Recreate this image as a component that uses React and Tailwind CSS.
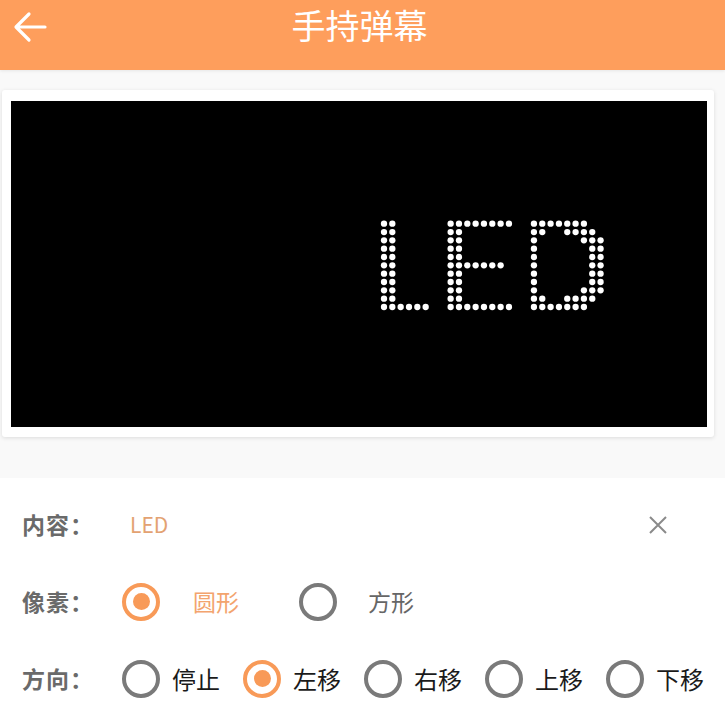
import React, { useState } from "react";

const FONT = { fontFamily: '"Noto Sans CJK SC", "Noto Sans", sans-serif' };

// dot patterns for the LED preview, 11 rows each
const LETTERS = [
  {
    col: 0,
    rows: ["11", "11", "11", "11", "11", "11", "11", "11", "11", "11", "111111"],
  },
  {
    col: 8,
    rows: ["11111111", "11", "11", "11", "11", "1111111", "11", "11", "11", "11", "11111111"],
  },
  {
    col: 18,
    rows: [
      "1111111..",
      "11..1111.",
      "1.....111",
      "1......11",
      "1......11",
      "1......11",
      "1......11",
      "1......11",
      "1.....111",
      "11..1111.",
      "1111111..",
    ],
  },
];

const LedScreen = () => {
  const pitch = 8.33;
  const x0 = 373;
  const y0 = 122.7;
  const dots = [];
  LETTERS.forEach((letter, li) => {
    letter.rows.forEach((row, r) => {
      row.split("").forEach((c, k) => {
        if (c === "1") {
          dots.push(
            <circle
              key={li + "-" + r + "-" + k}
              cx={x0 + (letter.col + k) * pitch}
              cy={y0 + r * pitch}
              r="3.15"
              fill="#fff"
            />
          );
        }
      });
    });
  });
  return (
    <svg width="696" height="326" viewBox="0 0 696 326" className="block">
      <rect width="696" height="326" fill="#000" />
      {dots}
    </svg>
  );
};

const Radio = ({ checked }) => {
  return checked ? (
    <span className="flex items-center justify-center w-[38px] h-[38px] shrink-0 rounded-full border-[4px] border-[#f89a58]">
      <span className="w-[17px] h-[17px] rounded-full bg-[#f89a58]" />
    </span>
  ) : (
    <span className="block w-[38px] h-[38px] shrink-0 rounded-full border-[4px] border-[#7a7a7a]" />
  );
};

const Label = ({ children }) => (
  <div className="w-[122px] pl-[22px] shrink-0 text-[23px] font-bold tracking-[1px] text-[#6a6a6a] leading-none">
    {children}
  </div>
);

const App = () => {
  const [shape, setShape] = useState("round");
  const [dir, setDir] = useState("left");
  const dirs = [
    { key: "stop", name: "停止" },
    { key: "left", name: "左移" },
    { key: "right", name: "右移" },
    { key: "up", name: "上移" },
    { key: "down", name: "下移" },
  ];

  return (
    <div className="w-[725px] h-[724px] overflow-hidden bg-[#f9f9f9]" style={FONT}>
      {/* top bar */}
      <div className="relative h-[70px] bg-[#fe9e5c] shadow-[0_1px_3px_rgba(0,0,0,0.08)]">
        <button className="absolute left-[10px] top-[8px] p-[2px]">
          <svg width="36" height="34" viewBox="0 0 36 34" fill="none">
            <path
              d="M33 17H5M17 4L4 17l13 13"
              stroke="#fff"
              strokeWidth="3.2"
              strokeLinecap="round"
              strokeLinejoin="round"
            />
          </svg>
        </button>
        <h1 className="pt-[3px] pr-[6px] text-center text-[34px] leading-[44px] text-white font-normal">
          手持弹幕
        </h1>
      </div>

      {/* preview */}
      <div className="mt-[20px] ml-[2px] w-[712px] bg-white rounded-[3px] pt-[11px] pl-[9px] pb-[10px] shadow-[0_1px_4px_rgba(0,0,0,0.12)]">
        <LedScreen />
      </div>

      {/* settings */}
      <div className="mt-[41px] bg-white pt-[8px] h-[300px]">
        <div className="flex items-center h-[77px]">
          <Label>内容：</Label>
          <span className="ml-[8px] text-[21px] text-[#e3a272]">LED</span>
          <button className="ml-auto mr-[56px] p-[1px]">
            <svg width="20" height="20" viewBox="0 0 20 20">
              <path d="M2 2l16 16M18 2L2 18" stroke="#8a8a8a" strokeWidth="2" />
            </svg>
          </button>
        </div>

        <div className="flex items-center h-[77px]">
          <Label>像素：</Label>
          <button className="flex items-center gap-[33px] w-[177px]" onClick={() => setShape("round")}>
            <Radio checked={shape === "round"} />
            <span className={"text-[23px] " + (shape === "round" ? "text-[#f3a46e]" : "text-[#666]")}>圆形</span>
          </button>
          <button className="flex items-center gap-[31px]" onClick={() => setShape("square")}>
            <Radio checked={shape === "square"} />
            <span className={"text-[23px] " + (shape === "square" ? "text-[#f3a46e]" : "text-[#666]")}>方形</span>
          </button>
        </div>

        <div className="flex items-center h-[77px]">
          <Label>方向：</Label>
          <div className="flex items-center gap-[23px]">
            {dirs.map((d) => (
              <button key={d.key} className="flex items-center gap-[12px]" onClick={() => setDir(d.key)}>
                <Radio checked={dir === d.key} />
                <span className="text-[24px] text-[#1a1a1a] leading-none">{d.name}</span>
              </button>
            ))}
          </div>
        </div>
      </div>
    </div>
  );
};

export default App;
